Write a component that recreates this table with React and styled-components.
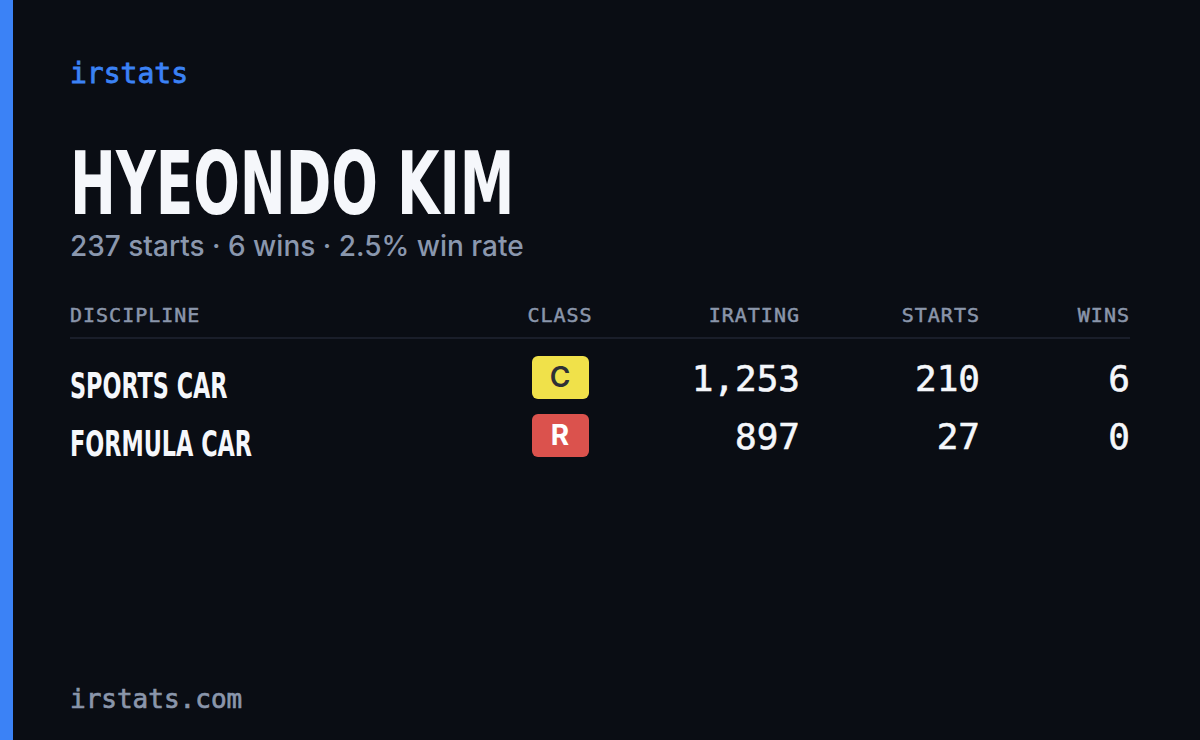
import React from "react";
import styled, { createGlobalStyle } from "styled-components";

const GlobalStyle = createGlobalStyle`
  html, body {
    margin: 0;
    padding: 0;
    background: #0a0d14;
  }
  * { box-sizing: border-box; }
`;

const MONO = `"DejaVu Sans Mono", "Liberation Mono", monospace`;
const COND = `"DejaVu Sans Condensed", "DejaVu Sans", sans-serif`;
const SANS = `Inter, "Open Sans", sans-serif`;

const Card = styled.div`
  width: 1200px;
  height: 740px;
  display: flex;
  background: #0a0d14;
  overflow: hidden;
`;

const Accent = styled.div`
  width: 13px;
  flex: none;
  background: #3b82f6;
`;

const Body = styled.div`
  flex: 1;
  display: flex;
  flex-direction: column;
  padding: 58px 57px 26px 57px;
`;

const Brand = styled.div`
  font-family: ${MONO};
  font-size: 28px;
  color: #3b82f6;
  line-height: 32px;
  -webkit-text-stroke: 0.8px #3b82f6;
`;

const Name = styled.h1`
  margin: 58px 0 0;
  font-family: ${COND};
  font-stretch: condensed;
  font-weight: 700;
  font-size: 88px;
  line-height: 72px;
  color: #f5f7fb;
  display: inline-block;
  transform: scaleX(0.693);
  transform-origin: left center;
  white-space: nowrap;
`;

const Summary = styled.div`
  margin-top: 8px;
  font-family: ${SANS};
  font-size: 28px;
  font-weight: 500;
  color: #8a97ae;
  line-height: 36px;
`;

const Table = styled.div`
  margin-top: 39px;
  display: grid;
  grid-template-columns: 440px 100px 190px 180px 150px;
  width: 1060px;
`;

const HeadCell = styled.div`
  font-family: ${MONO};
  font-size: 20px;
  line-height: 24px;
  letter-spacing: 1px;
  color: #8a96ab;
  -webkit-text-stroke: 0.5px #8a96ab;
  text-align: ${(p) => p.align || "left"};
  padding-bottom: 10px;
  border-bottom: 2px solid #1a1e2a;
  margin-bottom: 9px;
`;

const NameCell = styled.div`
  font-family: ${COND};
  font-stretch: condensed;
  font-weight: 700;
  font-size: 36px;
  color: #f5f7fb;
  white-space: nowrap;
  transform: scaleX(0.69);
  transform-origin: left center;
  height: 58px;
  display: flex;
  align-items: flex-end;
`;

const ClassCell = styled.div`
  display: flex;
  justify-content: center;
  align-items: center;
  height: 58px;
`;

const Badge = styled.span`
  width: 57px;
  height: 43px;
  border-radius: 6px;
  display: flex;
  align-items: center;
  justify-content: center;
  background: ${(p) => p.bg};
  color: ${(p) => p.fg};
  font-family: ${SANS};
  font-weight: ${(p) => (p.light ? 600 : 700)};
  font-size: 28px;
`;

const NumCell = styled.div`
  font-family: ${MONO};
  font-size: 36px;
  color: #f5f7fb;
  -webkit-text-stroke: 0.6px #f5f7fb;
  text-align: right;
  height: 58px;
  padding-top: 3px;
  display: flex;
  align-items: center;
  justify-content: flex-end;
`;

const Spacer = styled.div`
  flex: 1;
`;

const Footer = styled.div`
  font-family: ${MONO};
  font-size: 26px;
  color: #8a96ab;
  -webkit-text-stroke: 0.7px #8a96ab;
`;

const rows = [
  { name: "SPORTS CAR", cls: "C", bg: "#f0e14a", fg: "#2e3036", light: true, ir: "1,253", starts: 210, wins: 6 },
  { name: "FORMULA CAR", cls: "R", bg: "#db524d", fg: "#ffffff", light: false, ir: "897", starts: 27, wins: 0 },
];

export default function App() {
  return (
    <>
      <GlobalStyle />
      <Card>
        <Accent />
        <Body>
          <Brand>irstats</Brand>
          <div>
            <Name>HYEONDO KIM</Name>
          </div>
          <Summary>237 starts · 6 wins · 2.5% win rate</Summary>
          <Table>
            <HeadCell>DISCIPLINE</HeadCell>
            <HeadCell align="center">CLASS</HeadCell>
            <HeadCell align="right">IRATING</HeadCell>
            <HeadCell align="right">STARTS</HeadCell>
            <HeadCell align="right">WINS</HeadCell>
            {rows.map((r) => (
              <React.Fragment key={r.name}>
                <NameCell>{r.name}</NameCell>
                <ClassCell>
                  <Badge bg={r.bg} fg={r.fg} light={r.light}>{r.cls}</Badge>
                </ClassCell>
                <NumCell>{r.ir}</NumCell>
                <NumCell>{r.starts}</NumCell>
                <NumCell>{r.wins}</NumCell>
              </React.Fragment>
            ))}
          </Table>
          <Spacer />
          <Footer>irstats.com</Footer>
        </Body>
      </Card>
    </>
  );
}
